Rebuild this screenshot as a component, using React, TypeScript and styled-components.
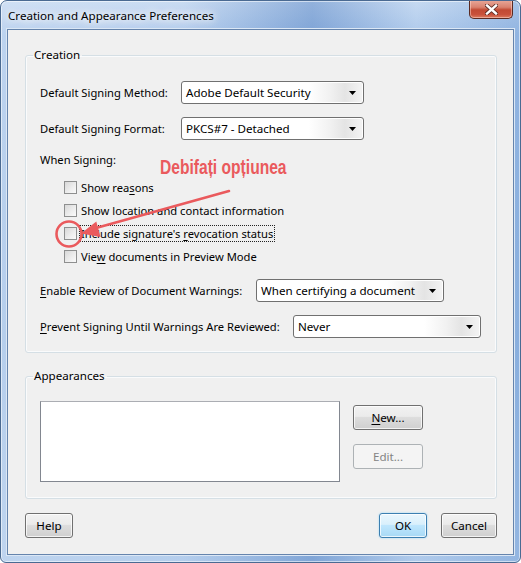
import React from 'react';
import styled, { createGlobalStyle } from 'styled-components';

const GlobalStyle = createGlobalStyle`
  html, body {
    margin: 0;
    padding: 0;
    background: #ffffff;
  }
  body {
    font-family: "Noto Sans", "Open Sans", sans-serif;
    font-size: 11.2px;
    color: #000000;
  }
`;

const Window = styled.div`
  position: relative;
  width: 521px;
  height: 563px;
  box-sizing: border-box;
  border: 1px solid #4a6a92;
  border-radius: 7px 7px 6px 6px;
  padding: 0 6px 7px;
  display: flex;
  flex-direction: column;
  background:
    linear-gradient(90deg, rgba(255, 255, 255, 0.3) 0%, rgba(255, 255, 255, 0.2) 35%, rgba(50, 100, 175, 0.3) 60%, rgba(255, 255, 255, 0.15) 80%, rgba(80, 130, 195, 0.2) 100%),
    linear-gradient(180deg, #bcd3ef 0%, #a0c0e8 6%, #96b9e4 60%, #a3c2e8 100%);
  box-shadow: inset 0 0 0 1px rgba(255, 255, 255, 0.55);
  overflow: hidden;
`;

const TitleBar = styled.div`
  height: 28px;
  display: flex;
  align-items: flex-start;
  justify-content: space-between;
`;

const Title = styled.div`
  padding: 7px 0 0 1px;
  font-size: 11.6px;
  color: #000;
  text-shadow: 0 0 6px #ffffff, 0 0 10px #ffffff, 0 0 14px rgba(255, 255, 255, 0.9);
`;

const CloseButton = styled.div`
  width: 44px;
  height: 19px;
  margin-top: -1px;
  margin-right: 1px;
  box-sizing: border-box;
  border: 1px solid #5a2a22;
  border-top: none;
  border-radius: 0 0 5px 5px;
  background: linear-gradient(180deg, #e9a99a 0%, #d9826f 40%, #c24a33 55%, #c8503a 80%, #dc7b5f 100%);
  box-shadow: inset 0 0 0 1px rgba(255, 220, 210, 0.5);
  display: flex;
  align-items: center;
  justify-content: center;
`;

const Client = styled.div`
  flex: 1;
  position: relative;
  background: #f0f0f0;
  border: 1px solid #6584ad;
  box-shadow: 0 0 0 1px #dbe7f5;
  padding: 18px 16px 0 17px;
  display: flex;
  flex-direction: column;
`;

const Group = styled.fieldset<{ $pb: number }>`
  margin: 0;
  padding: 0 14px ${p => p.$pb}px 14px;
  border: 1px solid #d5dfe5;
  border-radius: 3px;
  box-shadow: inset 0 0 0 1px #fafbfc;
  & + & {
    margin-top: 16px;
  }
`;

const Legend = styled.legend`
  margin-left: -7px;
  padding: 0 2px 0 1px;
  line-height: 14px;
  font-size: 11.6px;
`;

const Row = styled.div<{ $mt: number }>`
  display: flex;
  align-items: center;
  margin-top: ${p => p.$mt}px;
  min-height: 16px;
`;

const FieldLabel = styled.div<{ $w: number }>`
  width: ${p => p.$w}px;
  flex-shrink: 0;
  white-space: nowrap;
`;

const Select = styled.div<{ $w: number }>`
  position: relative;
  width: ${p => p.$w}px;
  height: 23px;
  box-sizing: border-box;
  border: 1px solid #707070;
  border-radius: 3px;
  background: linear-gradient(90deg, #ffffff 0%, #ffffff 70%, #f1f1f1 82%, #e4e4e4 90%, #f4f4f4 100%);
  box-shadow: inset 0 0 0 1px #ffffff;
  display: flex;
  align-items: center;
  padding-left: 4px;
  white-space: nowrap;
  font-size: 11.6px;
`;

const Arrow = styled.svg`
  position: absolute;
  right: 7px;
  top: 9px;
`;

const CheckRow = styled.div<{ $mt: number }>`
  display: flex;
  align-items: center;
  height: 16px;
  margin-top: ${p => p.$mt}px;
  padding-left: 24px;
`;

const Box = styled.span`
  width: 13px;
  height: 13px;
  box-sizing: border-box;
  border: 1px solid #8e8f8f;
  background: linear-gradient(135deg, #d8d8d8 0%, #eeeeee 60%, #fafafa 100%);
  margin-right: 3px;
  flex-shrink: 0;
`;

const CheckText = styled.span<{ $focus?: boolean }>`
  padding: 0 1px;
  line-height: 15px;
  outline: ${p => (p.$focus ? '1px dotted #222' : 'none')};
  outline-offset: 0;
`;

const U = styled.span`
  text-decoration: underline;
  text-underline-offset: 2px;
`;

const AppearanceBody = styled.div`
  display: flex;
  align-items: flex-start;
  margin-top: 18px;
`;

const ListBox = styled.div`
  width: 300px;
  height: 81px;
  box-sizing: border-box;
  background: #ffffff;
  border: 1px solid #828790;
  border-top-color: #abadb3;
  flex-shrink: 0;
`;

const SideButtons = styled.div`
  display: flex;
  flex-direction: column;
  gap: 14px;
  margin-left: 13px;
  margin-top: 4px;
`;

const Button = styled.div<{ $w: number; $variant?: 'default' | 'disabled' }>`
  width: ${p => p.$w}px;
  height: 25px;
  box-sizing: border-box;
  border-radius: 3px;
  display: flex;
  align-items: center;
  justify-content: center;
  font-size: 11.6px;
  border: 1px solid ${p => (p.$variant === 'default' ? '#3c7fb1' : p.$variant === 'disabled' ? '#adb2b5' : '#707070')};
  color: ${p => (p.$variant === 'disabled' ? '#838383' : '#000')};
  background: ${p =>
    p.$variant === 'default'
      ? 'linear-gradient(180deg, #eaf6fd 0%, #d9f0fc 45%, #bee6fd 50%, #a7d9f5 100%)'
      : p.$variant === 'disabled'
      ? '#f4f4f4'
      : 'linear-gradient(180deg, #f2f2f2 0%, #ebebeb 45%, #dddddd 50%, #cfcfcf 100%)'};
  box-shadow: inset 0 0 0 1px ${p => (p.$variant === 'disabled' ? '#f4f4f4' : 'rgba(255,255,255,0.75)')}
    ${p => (p.$variant === 'default' ? ', 0 0 2px #8fd3f8' : '')};
`;

const Footer = styled.div`
  display: flex;
  align-items: center;
  margin-top: 14px;
`;

const Spacer = styled.div`
  flex: 1;
`;

const FooterGap = styled.div`
  width: 14px;
`;

const Callout = styled.div`
  position: absolute;
  left: 152px;
  top: 126px;
  font-family: "Liberation Sans", "DejaVu Sans Condensed", sans-serif;
  font-weight: 700;
  font-size: 20px;
  color: #ea5a5d;
  white-space: nowrap;
  transform: scaleX(0.78);
  transform-origin: left center;
`;

const Markup = styled.svg`
  position: absolute;
  left: -8px;
  top: -30px;
  pointer-events: none;
`;

const Check = ({ mt, children, focus }: { mt: number; children: React.ReactNode; focus?: boolean }) => (
  <CheckRow $mt={mt}>
    <Box />
    <CheckText $focus={focus}>{children}</CheckText>
  </CheckRow>
);

const Combo = ({ w, value }: { w: number; value: string }) => (
  <Select $w={w}>
    {value}
    <Arrow width="7" height="4" viewBox="0 0 7 4">
      <polygon points="0,0 7,0 3.5,4" fill="#000" />
    </Arrow>
  </Select>
);

const App = () => {
  return (
    <>
      <GlobalStyle />
      <Window>
        <TitleBar>
          <Title>Creation and Appearance Preferences</Title>
          <CloseButton>
            <svg width="13" height="11" viewBox="0 0 13 11">
              <path d="M2 1.5 L11 9.5 M11 1.5 L2 9.5" stroke="#5a2a22" strokeWidth="4" strokeLinecap="square" />
              <path d="M2 1.5 L11 9.5 M11 1.5 L2 9.5" stroke="#ffffff" strokeWidth="2.4" strokeLinecap="square" />
            </svg>
          </CloseButton>
        </TitleBar>
        <Client>
          <Group $pb={14}>
            <Legend>Creation</Legend>
            <Row $mt={19}>
              <FieldLabel $w={141}>Default Signing Method:</FieldLabel>
              <Combo w={183} value="Adobe Default Security" />
            </Row>
            <Row $mt={13}>
              <FieldLabel $w={141}>Default Signing Format:</FieldLabel>
              <Combo w={183} value="PKCS#7 - Detached" />
            </Row>
            <Row $mt={11}>
              <FieldLabel $w={141}>When Signing:</FieldLabel>
            </Row>
            <Check mt={12}>
              Show rea<U>s</U>ons
            </Check>
            <Check mt={7}>Show location and contact information</Check>
            <Check mt={7} focus>
              Include signature's <U>r</U>evocation status
            </Check>
            <Check mt={7}>
              Vie<U>w</U> documents in Preview Mode
            </Check>
            <Row $mt={15}>
              <FieldLabel $w={216}>
                <U>E</U>nable Review of Document Warnings:
              </FieldLabel>
              <Combo w={188} value="When certifying a document" />
            </Row>
            <Row $mt={13}>
              <FieldLabel $w={253}>
                <U>P</U>revent Signing Until Warnings Are Reviewed:
              </FieldLabel>
              <Combo w={188} value="Never" />
            </Row>
          </Group>
          <Group $pb={16}>
            <Legend>Appearances</Legend>
            <AppearanceBody>
              <ListBox />
              <SideButtons>
                <Button $w={70}>
                  <span>
                    <U>N</U>ew...
                  </span>
                </Button>
                <Button $w={70} $variant="disabled">
                  Edit...
                </Button>
              </SideButtons>
            </AppearanceBody>
          </Group>
          <Footer>
            <Button $w={48}>Help</Button>
            <Spacer />
            <Button $w={48} $variant="default">
              OK
            </Button>
            <FooterGap />
            <Button $w={56}>Cancel</Button>
          </Footer>

          <Callout>Debifați opțiunea</Callout>
          <Markup width="521" height="563" viewBox="0 0 521 563">
            <line x1="229" y1="191" x2="96" y2="228" stroke="#ea5a5d" strokeWidth="2.6" strokeLinecap="round" />
            <polygon points="81,233.5 100.5,237 96.3,221.5" fill="#ea5a5d" />
            <circle cx="69" cy="234" r="12.5" fill="none" stroke="#ea5a5d" strokeWidth="2.6" />
          </Markup>
        </Client>
      </Window>
    </>
  );
};

export default App;
